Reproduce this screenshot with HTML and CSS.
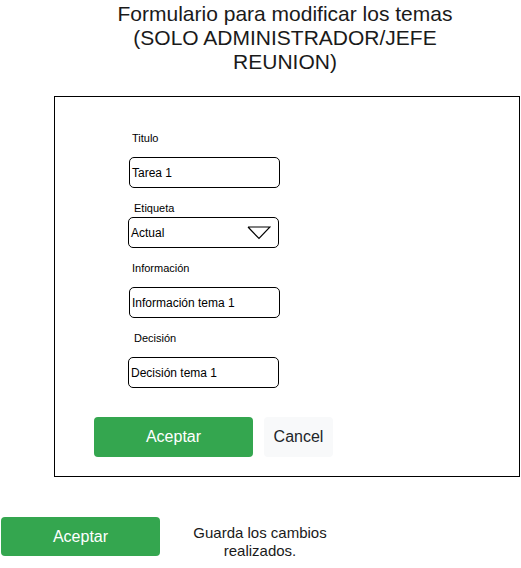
FILE: index.html
```html
<!DOCTYPE html>
<html>
<head>
<meta charset="utf-8">
<link rel="stylesheet" href="styles.css">
</head>
<body>
<h1 class="title">Formulario para modificar los temas<br>(SOLO ADMINISTRADOR/JEFE<br>REUNION)</h1>
<div class="panel">
  <div class="form">
    <div class="label l-titulo">Titulo</div>
    <div class="field f-titulo">Tarea 1</div>
    <div class="label l-etiqueta">Etiqueta</div>
    <div class="field select f-etiqueta"><span>Actual</span>
      <svg class="caret" width="24" height="14" viewBox="0 0 24 14"><polyline points="1,1 12,12.5 23,1 1,1" fill="none" stroke="#000" stroke-width="1.2" stroke-linejoin="miter"/></svg>
    </div>
    <div class="label l-info">Información</div>
    <div class="field f-info">Información tema 1</div>
    <div class="label l-decision">Decisión</div>
    <div class="field f-decision">Decisión tema 1</div>
  </div>
  <div class="actions">
    <button class="btn btn-primary">Aceptar</button>
    <button class="btn btn-light">Cancel</button>
  </div>
</div>
<div class="legend">
  <button class="btn btn-primary btn-legend">Aceptar</button>
  <div class="legend-text">Guarda los cambios<br>realizados.</div>
</div>
</body>
</html>
```
FILE: styles.css
```css
html, body {
  margin: 0;
  padding: 0;
  background: #fff;
}
body {
  font-family: "Liberation Sans", Arial, sans-serif;
  color: #1a1a1a;
  width: 521px;
  height: 568px;
  overflow: hidden;
}
.title {
  margin: 0 0 0 90px;
  width: 390px;
  padding-top: 2px;
  font-size: 21px;
  font-weight: normal;
  line-height: 24px;
  text-align: center;
  color: #1a1a1a;
}
.panel {
  margin: 22px 0 0 54px;
  width: 464px;
  height: 379px;
  border: 1px solid #000;
}
.form {
  display: flex;
  flex-direction: column;
  align-items: flex-start;
  padding-left: 73px;
  padding-top: 34px;
}
.label {
  font-size: 11px;
  line-height: 14px;
  color: #000;
}
.l-titulo { margin-left: 4px; }
.l-etiqueta { margin-left: 6px; margin-top: 13px; }
.l-info { margin-left: 4px; margin-top: 13px; }
.l-decision { margin-left: 6px; margin-top: 13px; }
.field {
  box-sizing: border-box;
  width: 151px;
  height: 31px;
  border: 1px solid #000;
  border-radius: 5px;
  font-size: 12px;
  line-height: 30px;
  padding-left: 2px;
  color: #000;
}
.f-titulo { margin-left: 1px; margin-top: 12px; }
.f-etiqueta { margin-top: 2px; display: flex; align-items: center; justify-content: space-between; padding-right: 7px; }
.f-info { margin-left: 1px; margin-top: 12px; }
.f-decision { margin-top: 12px; }
.caret { display: block; margin-top: 1px; }
.actions {
  display: flex;
  gap: 11px;
  padding-left: 39px;
  margin-top: 29px;
}
.btn {
  border: none;
  font-family: "Liberation Sans", Arial, sans-serif;
  font-size: 16px;
  height: 40px;
  border-radius: 4px;
  padding: 0;
  cursor: pointer;
}
.btn-primary {
  width: 159px;
  background: #34a64f;
  color: #fff;
}
.btn-light {
  width: 69px;
  background: #f8f9fa;
  color: #212529;
}
.legend {
  display: flex;
  align-items: flex-start;
  margin-top: 40px;
  padding-left: 1px;
}
.btn-legend {
  height: 39px;
}
.legend-text {
  margin-left: 20px;
  margin-top: 7px;
  width: 160px;
  text-align: center;
  font-size: 15px;
  line-height: 18px;
  color: #1a1a1a;
}
```
